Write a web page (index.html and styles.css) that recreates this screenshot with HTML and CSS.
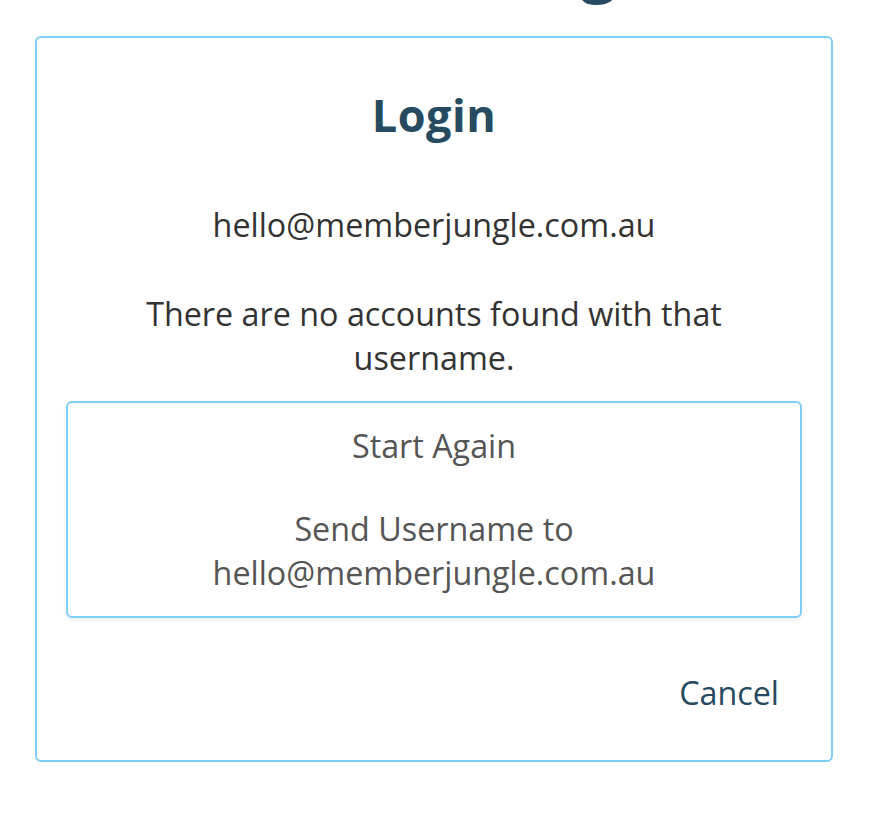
FILE: index.html
```html
<!DOCTYPE html>
<html lang="en">

<head>
    <meta charset="UTF-8">
    <meta name="viewport" content="width=device-width, initial-scale=1.0">
    <title>Member Login</title>
    <link rel="stylesheet" href="styles.css">
</head>

<body>
    <div class="page">
        <div class="page-header">
            <h1>Member Login</h1>
        </div>

        <div class="login-box">
            <h2>Login</h2>
            <p class="username">hello@memberjungle.com.au</p>
            <p class="message">There are no accounts found with that username.</p>

            <div class="options">
                <button class="option">Start Again</button>
                <button class="option">Send Username to<br>hello@memberjungle.com.au</button>
            </div>

            <div class="actions">
                <a href="#" class="cancel">Cancel</a>
            </div>
        </div>
    </div>
</body>

</html>
```

FILE: styles.css
```css
body {
    font-family: "Open Sans", sans-serif;
    margin: 0;
    padding: 0;
    background-color: #fff;
    color: #333;
}

.page {
    padding: 0 47px 58px 35px;
}

.page-header {
    height: 36px;
    display: flex;
    justify-content: center;
}

.page-header h1 {
    margin: -67px 0 0 30px;
    font-size: 64px;
    line-height: 64px;
    font-weight: 700;
    color: #264a5f;
}

.login-box {
    border: 2px solid #80cdf5;
    border-radius: 6px;
    padding: 49px 29px 46px;
    text-align: center;
}

h2 {
    margin: 0;
    font-size: 45px;
    line-height: 56px;
    font-weight: 700;
    letter-spacing: 0.5px;
    color: #264a5f;
}

.login-box p {
    font-size: 32.3px;
    line-height: 44px;
    margin: 0 auto;
}

.username {
    margin-top: 59px !important;
}

.message {
    margin-top: 45px !important;
    max-width: 600px;
}

.options {
    margin-top: 22px;
    border: 2px solid #80cdf5;
    border-radius: 6px;
    box-shadow: 0 2px 4px rgba(0, 0, 0, 0.08);
    padding: 20px 10px 22px;
    display: flex;
    flex-direction: column;
    gap: 39px;
}

.option {
    font-family: "Open Sans", sans-serif;
    font-size: 32.3px;
    line-height: 44px;
    color: #555;
    background: none;
    border: none;
    padding: 0;
    cursor: pointer;
}

.actions {
    margin-top: 52px;
    text-align: right;
    padding-right: 23px;
}

.cancel {
    font-size: 32.3px;
    line-height: 44px;
    color: #264a5f;
    text-decoration: none;
}
```
